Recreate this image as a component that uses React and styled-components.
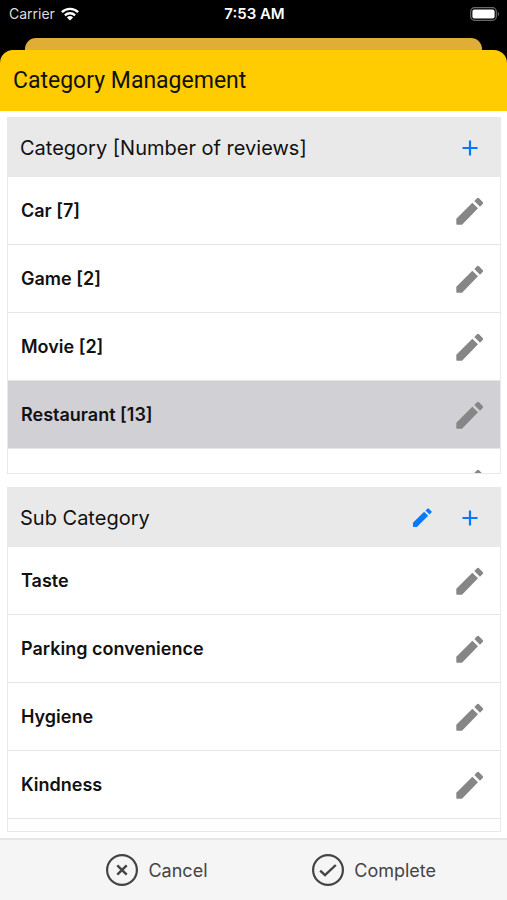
import React from "react";
import styled, { createGlobalStyle } from "styled-components";

const GlobalStyle = createGlobalStyle`
  * {
    box-sizing: border-box;
  }

  body {
    margin: 0;
    background-color: #fff;
    font-family: Inter, "Liberation Sans", sans-serif;
    color: #111;
  }
`;

const Screen = styled.div`
  display: flex;
  flex-direction: column;
  height: 100vh;
  min-height: 480px;
`;

const Top = styled.div`
  background-color: #000;
`;

const StatusBar = styled.div`
  display: grid;
  grid-template-columns: 1fr auto 1fr;
  align-items: center;
  height: 38px;
  padding: 0 7px 11px 9px;
  color: #fff;
  font-size: 14px;
`;

const Carrier = styled.span`
  display: flex;
  align-items: center;
  gap: 6px;
  color: #ddd;
`;

const Time = styled.span`
  font-size: 15px;
  font-weight: 600;
`;

const BatteryIcon = styled.svg`
  justify-self: end;
`;

const BackSheet = styled.div`
  height: 12px;
  margin: 0 25px;
  border-radius: 11px 11px 0 0;
  background-color: #e0ad36;
`;

const TitleBar = styled.header`
  display: flex;
  align-items: center;
  height: 61px;
  padding: 0 13px;
  border-radius: 13px 13px 0 0;
  background-color: #ffcc01;
`;

const Title = styled.h1`
  margin: 0;
  font-family: Roboto, Inter, sans-serif;
  font-size: 23px;
  font-weight: 400;
`;

const Body = styled.main`
  display: flex;
  flex-direction: column;
  flex: 1;
  gap: 13px;
  min-height: 0;
  padding: 6px 6px 6px 7px;
`;

const Panel = styled.section`
  display: flex;
  flex-direction: column;
  flex: 1 1 ${(props) => props.$basis};
  min-height: 0;
  border: 1px solid #e9e9e9;
`;

const PanelHeader = styled.div`
  display: flex;
  align-items: center;
  flex-shrink: 0;
  height: 59px;
  padding: 0 12px;
  background-color: #e9e9e9;
`;

const PanelTitle = styled.h2`
  flex: 1;
  margin: 0;
  font-size: 20px;
  font-weight: 400;
`;

const IconButton = styled.button`
  display: flex;
  align-items: center;
  justify-content: center;
  width: 36px;
  height: 36px;
  margin-left: ${(props) => (props.$spaced ? "12px" : "0")};
  padding: 0;
  border: none;
  background: none;
  color: ${(props) => props.$color};
  cursor: pointer;
`;

const List = styled.ul`
  flex: 1;
  min-height: 0;
  margin: 0;
  padding: 0;
  list-style: none;
  overflow-y: auto;
  scrollbar-width: none;
`;

const Row = styled.li`
  display: flex;
  align-items: center;
  justify-content: space-between;
  height: 68px;
  padding: 0 12px 0 13px;
  border-bottom: 1px solid #e5e5e5;
  background-color: ${(props) => (props.$selected ? "#d1d0d5" : "#fff")};
  font-size: 18px;
  font-weight: 600;
`;

const Footer = styled.footer`
  display: flex;
  align-items: center;
  justify-content: space-between;
  flex-shrink: 0;
  height: 62px;
  padding: 0 14% 0 21%;
  border-top: 2px solid #e5e5e5;
  background-color: #f6f5f6;
`;

const FooterButton = styled.button`
  display: flex;
  align-items: center;
  gap: 10px;
  padding: 0;
  border: none;
  background: none;
  color: #444;
  font-family: inherit;
  font-size: 18px;
  cursor: pointer;
`;

const BLUE = "#067aff";
const GRAY = "#868686";

const categories = [
  { name: "Car [7]" },
  { name: "Game [2]" },
  { name: "Movie [2]" },
  { name: "Restaurant [13]", selected: true },
  { name: "" },
];

const subCategories = [
  { name: "Taste" },
  { name: "Parking convenience" },
  { name: "Hygiene" },
  { name: "Kindness" },
  { name: "" },
];

function Pencil({ size }) {
  return (
    <svg width={size} height={size} viewBox="0 0 90 90" fill="currentColor">
      <path d="M52 20L69 37L21 86H6Q4 86 4 84V68Z" />
      <path d="M58 15L66 7Q69 4 72 7L83 18Q86 21 83 24L75 32Z" />
    </svg>
  );
}

function Plus() {
  return (
    <svg width="16" height="16" viewBox="0 0 16 16" fill="currentColor">
      <path d="M6.9 0.5h2.2v6.4h6.4v2.2H9.1v6.4H6.9V9.1H0.5V6.9h6.4z" />
    </svg>
  );
}

function ItemList({ items }) {
  return (
    <List>
      {items.map((item, i) => (
        <Row key={i} $selected={item.selected}>
          <span>{item.name}</span>
          <IconButton $color={GRAY} aria-label="Edit">
            <Pencil size={30} />
          </IconButton>
        </Row>
      ))}
    </List>
  );
}

export default function App() {
  return (
    <>
      <GlobalStyle />
      <Screen>
        <Top>
          <StatusBar>
            <Carrier>
              Carrier
              <svg width="18" height="14" viewBox="0 0 18 14">
                <g fill="none" stroke="#fff" strokeWidth="2.4">
                  <path d="M0.9 5.2A11.5 11.5 0 0 1 17.1 5.2" />
                  <path d="M3.9 8.3A7.3 7.3 0 0 1 14.1 8.3" />
                </g>
                <path
                  d="M9 13.6L5.9 10.4A4.6 4.6 0 0 1 12.1 10.4Z"
                  fill="#fff"
                />
              </svg>
            </Carrier>
            <Time>7:53 AM</Time>
            <BatteryIcon width="30" height="14" viewBox="0 0 30 14">
              <rect
                x="0.7"
                y="0.7"
                width="25.6"
                height="12.6"
                rx="3.8"
                fill="none"
                stroke="#69696b"
                strokeWidth="1.2"
              />
              <rect x="2.4" y="2.4" width="22.2" height="9.2" rx="2" fill="#fff" />
              <path d="M27.8 4.6Q30.4 7 27.8 9.4Z" fill="#69696b" />
            </BatteryIcon>
          </StatusBar>
          <BackSheet />
          <TitleBar>
            <Title>Category Management</Title>
          </TitleBar>
        </Top>

        <Body>
          <Panel $basis="357px">
            <PanelHeader>
              <PanelTitle>Category [Number of reviews]</PanelTitle>
              <IconButton $color={BLUE} aria-label="Add category">
                <Plus />
              </IconButton>
            </PanelHeader>
            <ItemList items={categories} />
          </Panel>

          <Panel $basis="345px">
            <PanelHeader>
              <PanelTitle>Sub Category</PanelTitle>
              <IconButton $color={BLUE} aria-label="Edit sub category">
                <Pencil size={21} />
              </IconButton>
              <IconButton $color={BLUE} $spaced aria-label="Add sub category">
                <Plus />
              </IconButton>
            </PanelHeader>
            <ItemList items={subCategories} />
          </Panel>
        </Body>

        <Footer>
          <FooterButton>
            <svg width="32" height="32" viewBox="1 1 32 32" fill="none" stroke="currentColor">
              <circle cx="17" cy="17" r="14.9" strokeWidth="2.2" />
              <path d="M12.3 12.3L21.7 21.7M21.7 12.3L12.3 21.7" strokeWidth="2.4" />
            </svg>
            Cancel
          </FooterButton>
          <FooterButton>
            <svg width="32" height="32" viewBox="1 1 32 32" fill="none" stroke="currentColor">
              <circle cx="17" cy="17" r="14.9" strokeWidth="2.2" />
              <path d="M9.2 17.6L14 22.2L24.8 12" strokeWidth="2.4" />
            </svg>
            Complete
          </FooterButton>
        </Footer>
      </Screen>
    </>
  );
}
